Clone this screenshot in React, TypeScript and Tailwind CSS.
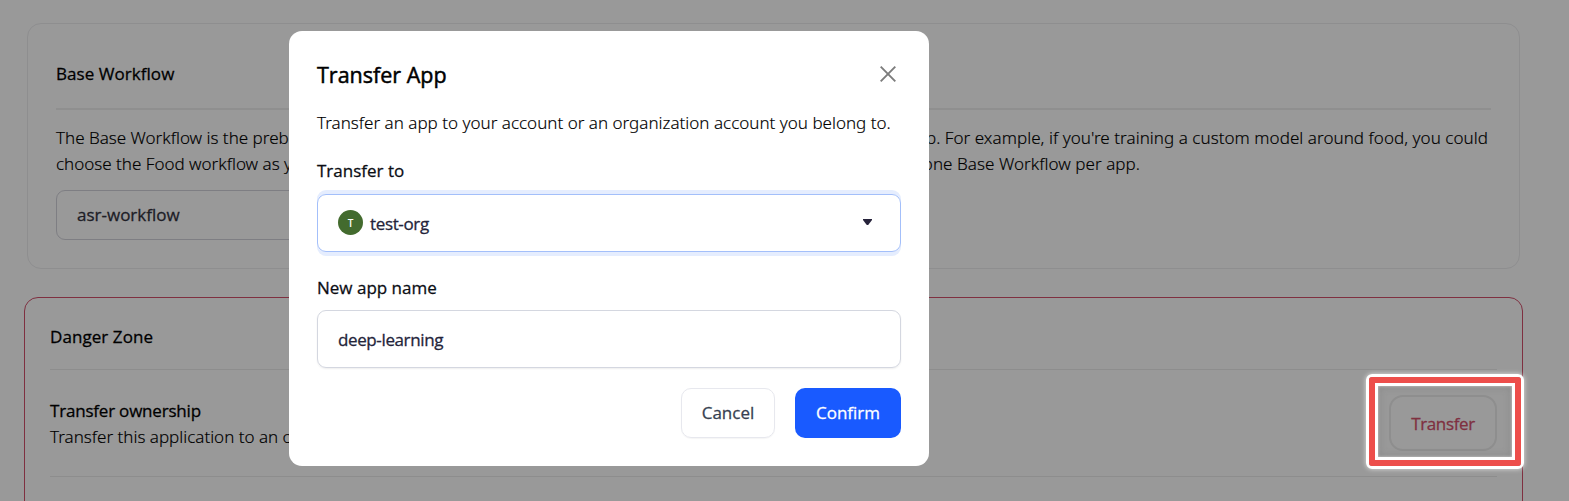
import type { ReactNode } from "react";

const body =
  "font-['Noto_Sans',sans-serif] font-[330] text-[17px] leading-[26px] whitespace-nowrap [-webkit-text-stroke:0.15px]";
const strong =
  "font-['Open_Sans',sans-serif] font-normal text-[17px] leading-[26px] whitespace-nowrap [-webkit-text-stroke:0.28px]";

function SplitLine({ start, end, className = "" }: { start: string; end: string; className?: string }) {
  return (
    <div className={`flex justify-between text-black ${body} ${className}`}>
      <span className="w-[400px] shrink-0">{start}</span>
      <span className="tracking-[0.05px]">{end}</span>
    </div>
  );
}

function BaseWorkflow() {
  return (
    <section className="ml-[27px] h-[246px] w-[1493px] rounded-[14px] border border-[#ededef] px-7 pt-[37px]">
      <h2 className={`tracking-[0.05px] text-black ${strong}`}>Base Workflow</h2>
      <div className="mt-[21px] h-[2px] bg-[#efefef]" />
      <SplitLine
        className="mt-[15px] pr-[3px]"
        start="The Base Workflow is the prebuilt"
        end="app. For example, if you're training a custom model around food, you could"
      />
      <SplitLine
        className="pr-[351px]"
        start="choose the Food workflow as your"
        end="one Base Workflow per app."
      />
      <div className="mt-[13px] flex h-[50px] w-[500px] items-center rounded-[9px] border border-[#d3d3db] pl-5">
        <span className={`text-[#33333f] ${strong}`}>asr-workflow</span>
      </div>
    </section>
  );
}

function DangerZone() {
  return (
    <section className="mt-7 ml-6 h-[260px] w-[1499px] rounded-[14px] border border-[#d4506c] px-[25px] pt-[26px]">
      <h2 className={`tracking-[0.07px] text-black ${strong}`}>Danger Zone</h2>
      <div className="mt-[19px] h-px bg-[#ebebeb]" />
      <div className="flex h-[106px] items-center justify-between">
        <div className="pt-[2px] text-black">
          <h3 className={`tracking-[-0.2px] ${strong}`}>Transfer ownership</h3>
          <p className={body}>Transfer this application to an organization</p>
        </div>
        <button className={`h-14 w-[108px] rounded-[14px] border-2 border-[#ededed] pt-px tracking-[-0.35px] text-[#d4506c] ${strong}`}>
          Transfer
        </button>
      </div>
      <div className="h-px bg-[#ebebeb]" />
    </section>
  );
}

function Field({ label, focused, children, className = "" }: { label: string; focused?: boolean; children: ReactNode; className?: string }) {
  return (
    <div className={className}>
      <div className={`text-[#0b0d14] ${strong}`}>{label}</div>
      <div
        className={
          focused
            ? "mt-[10px] flex h-[58px] items-center rounded-[9px] border border-[#a3bffa] px-5 shadow-[0_-4px_0_#e5edfe,0_4px_0_#e5edfe]"
            : "mt-[9px] flex h-[58px] items-center rounded-[9px] border border-[#d4d7e0] px-5 shadow-[0_1px_2px_rgba(0,0,0,0.07)]"
        }
      >
        {children}
      </div>
    </div>
  );
}

function TransferDialog() {
  return (
    <div className="absolute top-[31px] left-[289px] h-[435px] w-[640px] rounded-[13px] bg-white px-7 pt-[29px]">
      <div className="flex h-[30px] items-center justify-between">
        <h1 className="font-['Open_Sans',sans-serif] text-[21.5px] leading-[30px] font-medium text-black [-webkit-text-stroke:0.5px]">
          Transfer App
        </h1>
        <svg className="mr-[5px] mb-[2px] h-4 w-4" viewBox="0 0 16 16" fill="none" stroke="#7c7c7c" strokeWidth="1.9">
          <path d="M0.7 0.7 15.3 15.3M15.3 0.7 0.7 15.3" />
        </svg>
      </div>
      <p className={`mt-5 tracking-[0.01px] text-black ${body}`}>
        Transfer an app to your account or an organization account you belong to.
      </p>
      <Field label="Transfer to" focused className="mt-[22px]">
        <span className="-mt-[2px] flex h-[25px] w-[25px] items-center justify-center rounded-full bg-[#436b2e] pt-[2px] font-['Open_Sans',sans-serif] text-[10px] font-semibold text-white">
          T
        </span>
        <span className={`ml-[7px] pt-px tracking-[-0.35px] text-[#24243a] ${strong}`}>test-org</span>
        <svg className="mr-[8px] mb-[2px] ml-auto h-[6px] w-[9px]" viewBox="0 0 9 6" fill="#27233b">
          <path d="M0 0h9v1L5.2 6H3.8L0 1z" />
        </svg>
      </Field>
      <Field label="New app name" className="mt-[23px]">
        <span className={`pt-[2px] tracking-[-0.38px] text-[#24243a] ${strong}`}>deep-learning</span>
      </Field>
      <div className="mt-5 flex justify-end gap-5">
        <button className={`h-[50px] w-[94px] rounded-[10px] border border-[#e7e8ee] text-[#374151] shadow-[0_1px_1px_rgba(0,0,0,0.04)] ${strong}`}>
          Cancel
        </button>
        <button className={`h-[50px] w-[106px] rounded-[10px] bg-[#195aff] text-white ${strong}`}>
          Confirm
        </button>
      </div>
    </div>
  );
}

export default function App() {
  return (
    <div className="relative h-[501px] w-[1569px] overflow-hidden bg-white pt-[23px]">
      <BaseWorkflow />
      <DangerZone />
      <div className="absolute inset-0 bg-black/40" />
      <TransferDialog />
      <div className="absolute top-[374px] left-[1366px] h-[95px] w-[158px] rounded-[6px] border-[3px] border-white shadow-[0_0_5px_rgba(255,255,255,0.7)]">
        <div className="h-full w-full rounded-[3px] border-[6px] border-[#ed4e4b]">
          <div className="h-full w-full border-[3px] border-white shadow-[inset_0_0_3px_rgba(255,255,255,0.6),inset_0_0_8px_rgba(90,90,90,0.3)]" />
        </div>
      </div>
    </div>
  );
}
